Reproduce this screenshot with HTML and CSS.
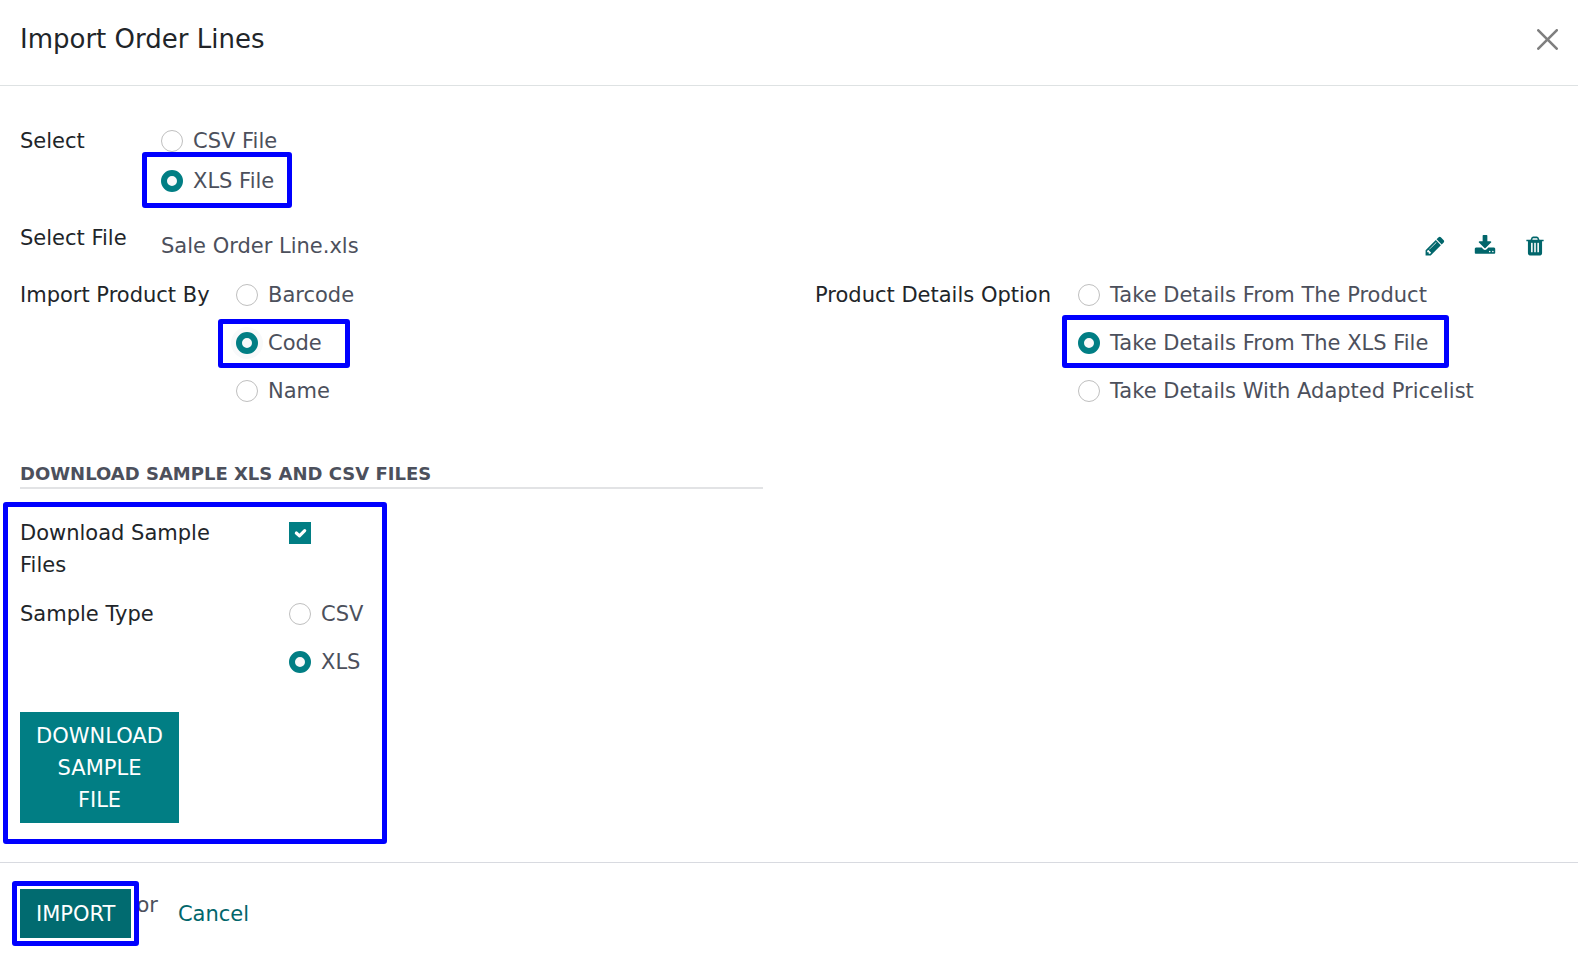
FILE: index.html
```
<!DOCTYPE html>
<html lang="en">
<head>
<meta charset="utf-8">
<title>Import Order Lines</title>
<link rel="stylesheet" href="styles.css">
</head>
<body>
<form class="dialog">
  <header class="dialog-header">
    <h1 class="title">Import Order Lines</h1>
    <button class="icon-button close" type="button" aria-label="Close">
      <svg class="close-icon" viewBox="0 0 16 16"><path d="M.293.293a1 1 0 011.414 0L8 6.586 14.293.293a1 1 0 111.414 1.414L9.414 8l6.293 6.293a1 1 0 01-1.414 1.414L8 9.414l-6.293 6.293a1 1 0 01-1.414-1.414L6.586 8 .293 1.707a1 1 0 010-1.414z"/></svg>
    </button>
  </header>

  <main class="dialog-body">
    <div class="row file-row">
      <span class="label" id="select-label">Select</span>
      <div class="options compact" role="radiogroup" aria-labelledby="select-label">
        <label class="option"><input class="radio" type="radio" name="file-type">CSV File</label>
        <label class="option marked mark-xls"><input class="radio" type="radio" name="file-type" checked>XLS File</label>
      </div>
    </div>

    <div class="row file-row upload-row">
      <span class="label">Select File</span>
      <div class="file">
        <span class="file-name">Sale Order Line.xls</span>
        <div class="file-actions">
          <button class="icon-button" type="button" aria-label="Edit">
            <svg class="icon" viewBox="0 0 1792 1792"><path d="M491 1536l91-91-235-235-91 91v107h128v128h107zm523-928q0-22-22-22-10 0-17 7l-542 542q-7 7-7 17 0 22 22 22 10 0 17-7l542-542q7-7 7-17zm-54-192l416 416-832 832h-416v-416zm683 96q0 53-37 90l-166 166-416-416 166-165q36-38 90-38 53 0 91 38l235 234q37 39 37 91z"/></svg>
          </button>
          <button class="icon-button" type="button" aria-label="Download">
            <svg class="icon" viewBox="0 0 1792 1792"><path d="M1344 1344q0-26-19-45t-45-19-45 19-19 45 19 45 45 19 45-19 19-45zm256 0q0-26-19-45t-45-19-45 19-19 45 19 45 45 19 45-19 19-45zm128-224v320q0 40-28 68t-68 28h-1472q-40 0-68-28t-28-68v-320q0-40 28-68t68-28h465l135 136q58 56 136 56t136-56l136-136h464q40 0 68 28t28 68zm-325-569q17 41-14 70l-448 448q-18 19-45 19t-45-19l-448-448q-31-29-14-70 17-39 59-39h256v-448q0-26 19-45t45-19h256q26 0 45 19t19 45v448h256q42 0 59 39z"/></svg>
          </button>
          <button class="icon-button" type="button" aria-label="Delete">
            <svg class="icon" viewBox="0 0 1792 1792"><path d="M704 1376v-704q0-14-9-23t-23-9h-64q-14 0-23 9t-9 23v704q0 14 9 23t23 9h64q14 0 23-9t9-23zm256 0v-704q0-14-9-23t-23-9h-64q-14 0-23 9t-9 23v704q0 14 9 23t23 9h64q14 0 23-9t9-23zm256 0v-704q0-14-9-23t-23-9h-64q-14 0-23 9t-9 23v704q0 14 9 23t23 9h64q14 0 23-9t9-23zm-544-992h448l-48-117q-7-9-17-11h-317q-10 2-17 11zm928 32v64q0 14-9 23t-23 9h-96v948q0 83-47 143.5t-113 60.5h-832q-66 0-113-58.5t-47-141.5v-952h-96q-14 0-23-9t-9-23v-64q0-14 9-23t23-9h309l70-167q15-37 54-63t79-26h320q40 0 79 26t54 63l70 167h309q14 0 23 9t9 23z"/></svg>
          </button>
        </div>
      </div>
    </div>

    <div class="columns">
      <div class="row product-row">
        <span class="label" id="by-label">Import Product By</span>
        <div class="options" role="radiogroup" aria-labelledby="by-label">
          <label class="option"><input class="radio" type="radio" name="by">Barcode</label>
          <label class="option marked mark-code"><input class="radio glow" type="radio" name="by" checked>Code</label>
          <label class="option"><input class="radio" type="radio" name="by">Name</label>
        </div>
      </div>
      <div class="row details-row">
        <span class="label" id="details-label">Product Details Option</span>
        <div class="options" role="radiogroup" aria-labelledby="details-label">
          <label class="option"><input class="radio" type="radio" name="details">Take Details From The Product</label>
          <label class="option marked mark-details"><input class="radio" type="radio" name="details" checked>Take Details From The XLS File</label>
          <label class="option"><input class="radio" type="radio" name="details">Take Details With Adapted Pricelist</label>
        </div>
      </div>
    </div>

    <div class="columns">
      <section>
        <h2 class="section-title">Download Sample XLS and CSV Files</h2>
        <div class="sample marked mark-sample">
          <div class="row sample-row">
            <label class="label" for="download-sample">Download Sample Files</label>
            <span class="check">
              <input class="checkbox" type="checkbox" id="download-sample" checked>
              <svg class="tick" viewBox="0 0 21 21"><path d="M7 10.500l3 2.800 5-5"/></svg>
            </span>
          </div>
          <div class="row sample-row">
            <span class="label" id="type-label">Sample Type</span>
            <div class="options" role="radiogroup" aria-labelledby="type-label">
              <label class="option"><input class="radio" type="radio" name="sample">CSV</label>
              <label class="option"><input class="radio" type="radio" name="sample" checked>XLS</label>
            </div>
          </div>
          <button class="button download" type="button">Download Sample File</button>
        </div>
      </section>
    </div>
  </main>

  <footer class="dialog-footer">
    <div class="marked mark-import"><button class="button import" type="button">Import</button></div>
    <span class="or">or</span>
    <button class="button cancel" type="button">Cancel</button>
  </footer>
</form>
</body>
</html>
```
FILE: styles.css
```
* { box-sizing: border-box; }

body {
  margin: 0;
  background: #fff;
  color: #4c505c;
  font: 21px/32px "DejaVu Sans", sans-serif;
}

.dialog-header {
  display: flex;
  align-items: flex-start;
  justify-content: space-between;
  padding: 20px 20px 27px;
  border-bottom: 1px solid #dee2e3;
}

.title {
  margin: 0;
  color: #212529;
  font-size: 26px;
  font-weight: 400;
  line-height: 38px;
}

.icon-button {
  display: flex;
  padding: 0;
  border: 0;
  background: none;
  color: #01666b;
  cursor: pointer;
}

.icon { width: 22px; height: 22px; fill: currentColor; }

.close { margin-top: 9px; color: #7f7f7f; }
.close-icon { width: 21px; height: 21px; fill: currentColor; }

.dialog-body { padding: 39px 20px; }

.row { display: flex; }
.label { flex: none; color: #212529; }
.file-row .label { width: 141px; }
.product-row .label { width: 216px; }
.details-row .label { width: 263px; }
.sample-row .label { width: 269px; padding-right: 54px; }

.options { display: flex; flex-direction: column; align-items: flex-start; gap: 16px; }
.compact { gap: 8px; }
.option { display: flex; align-items: center; gap: 10px; }

.radio {
  flex: none;
  width: 22px;
  height: 22px;
  margin: 0;
  appearance: none;
  border: 1px solid #bfbfbf;
  border-radius: 50%;
  background: #fff;
}
.radio:checked { border: 6px solid #017e84; background: #f8f9fa; }
.glow { box-shadow: 0 0 0 5px #f8f9fa; }

.upload-row { margin: 25px 0 17px; }
.file {
  display: flex;
  flex: 1;
  align-items: center;
  justify-content: space-between;
  padding-top: 8px;
}
.file-actions { display: flex; gap: 28px; padding-right: 12px; }

.columns {
  display: grid;
  grid-template-columns: 1fr 1fr;
  column-gap: 52px;
}

.section-title {
  margin: 53px 0 28px;
  border-bottom: 2px solid #e2e3e5;
  font-size: 18px;
  font-weight: 700;
  line-height: 27px;
  text-transform: uppercase;
}

.sample { display: flex; flex-direction: column; align-items: flex-start; gap: 17px; }

.check { position: relative; display: flex; margin-top: 5px; height: 22px; }
.checkbox { width: 22px; height: 22px; margin: 0; appearance: none; background: #017e84; }
.tick {
  position: absolute;
  inset: 0;
  fill: none;
  stroke: #fff;
  stroke-width: 3;
  stroke-linecap: round;
  stroke-linejoin: round;
  pointer-events: none;
}

.button {
  padding: 9px 16px 8px;
  border: 0;
  background: #017e84;
  color: #fff;
  font: inherit;
  text-transform: uppercase;
  cursor: pointer;
}
.download { width: 159px; margin-top: 17px; padding: 8px 16px 7px; }
.import { display: block; background: #016b70; }
.cancel { margin-left: 4px; background: none; color: #01666b; text-transform: none; }

.dialog-footer {
  display: flex;
  align-items: flex-start;
  padding: 26px 20px;
  border-top: 1px solid #d8dae0;
}
.or { margin-left: 5px; }

/* Highlight frames drawn over the controls they surround */
.marked { position: relative; }
.marked::after {
  content: "";
  position: absolute;
  border: 5px solid #00f;
  border-radius: 3px;
  pointer-events: none;
}
.mark-xls::after { inset: -13px -18px -11px -19px; }
.mark-code::after { inset: -8px -28px -9px -18px; }
.mark-details::after { inset: -12px -21px -9px -16px; }
.mark-sample { width: 350px; }
.mark-sample::after { inset: -15px -17px -21px -17px; }
.mark-import::after { inset: -8px; }
```
